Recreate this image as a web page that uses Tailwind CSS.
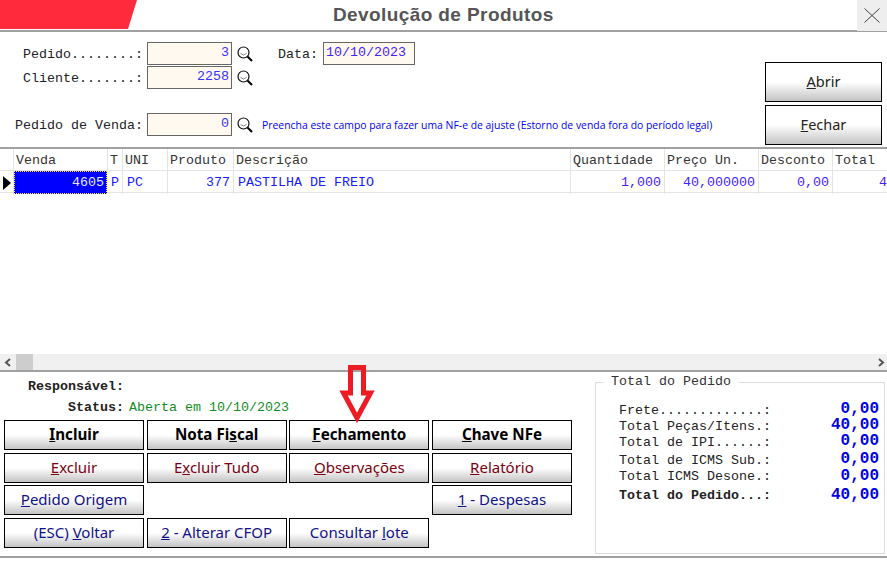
<!DOCTYPE html>
<html lang="pt-BR">
<head>
    <meta charset="UTF-8">
    <title>Devolução de Produtos</title>
    <script src="https://cdn.jsdelivr.net/npm/@tailwindcss/browser@4"></script>
</head>
<body class="bg-white">
    <div class="w-[887px] h-[561px] overflow-hidden flex flex-col bg-white font-['Liberation_Mono',monospace] text-[13.33px] leading-4 text-[#222]">

        <!-- Title bar -->
        <div class="flex h-[30px] shrink-0 relative z-10">
            <div class="w-[137px] h-[29px] bg-[#ff2b3d] [clip-path:polygon(0_0,100%_0,128px_100%,0_100%)]"></div>
            <div class="flex-1 pl-[196px] font-['Liberation_Sans',sans-serif] font-bold text-[19px] tracking-[0.4px] leading-[30px] text-[#555]">Devolução de Produtos</div>
            <div class="w-[30px] h-[31px] bg-[#eeeeee] flex items-center justify-center">
                <svg width="16" height="15" viewBox="0 0 16 15" fill="none" stroke="#444" stroke-width="1"><path d="M0.500 0.500L15.500 14.500M15.500 0.500L0.500 14.500"/></svg>
            </div>
        </div>

        <!-- Header form -->
        <div class="h-[119px] shrink-0 border-y-[2px] border-[#a0a0a0] relative flex">
            <div class="w-[765px] pt-[10px] flex flex-col">
                <div class="flex items-center h-[23px]">
                    <span class="w-[147px] pl-[23px] pt-[3px]">Pedido........:</span>
                    <div class="w-[85px] h-[23px] border border-[#666] bg-[#fff9ef] text-right pr-[2px] pt-[2px] text-[#3333ff]">3</div>
                    <svg class="ml-[5px]" width="16" height="16" viewBox="0 0 16 16" fill="none"><circle cx="6.500" cy="6.500" r="5.500" stroke="#111" stroke-width="1.200"/><path d="M3.500 7.500Q6.500 10.500 9.500 7.500" stroke="#888"/><path d="M10.500 10.500L15 15" stroke="#000" stroke-width="2"/></svg>
                    <span class="ml-[25px] pt-[3px]">Data:</span>
                    <div class="ml-[5px] w-[92px] h-[23px] border border-[#666] bg-[#fff9ef] pl-[2px] pt-[2px] text-[#4422ff]">10/10/2023</div>
                </div>
                <div class="flex items-center h-[23px] mt-[1px]">
                    <span class="w-[147px] pl-[23px] pt-[3px]">Cliente.......:</span>
                    <div class="w-[85px] h-[23px] border border-[#666] bg-[#fff9ef] text-right pr-[2px] pt-[2px] text-[#3333ff]">2258</div>
                    <svg class="ml-[5px]" width="16" height="16" viewBox="0 0 16 16" fill="none"><circle cx="6.500" cy="6.500" r="5.500" stroke="#111" stroke-width="1.200"/><path d="M3.500 7.500Q6.500 10.500 9.500 7.500" stroke="#888"/><path d="M10.500 10.500L15 15" stroke="#000" stroke-width="2"/></svg>
                </div>
                <div class="flex items-center h-[23px] mt-[24px]">
                    <span class="w-[147px] pl-[15px] pt-[3px]">Pedido de Venda:</span>
                    <div class="w-[85px] h-[23px] border border-[#666] bg-[#fff9ef] text-right pr-[2px] pt-[2px] text-[#3333ff]">0</div>
                    <svg class="ml-[5px]" width="16" height="16" viewBox="0 0 16 16" fill="none"><circle cx="6.500" cy="6.500" r="5.500" stroke="#111" stroke-width="1.200"/><path d="M3.500 7.500Q6.500 10.500 9.500 7.500" stroke="#888"/><path d="M10.500 10.500L15 15" stroke="#000" stroke-width="2"/></svg>
                    <span class="ml-[9px] font-['Open_Sans',sans-serif] text-[10.42px] text-[#0000f0] whitespace-nowrap">Preencha este campo para fazer uma NF-e de ajuste (Estorno de venda fora do período legal)</span>
                </div>
            </div>
            <div class="pt-[30px] flex flex-col gap-[3px] font-['Noto_Sans',sans-serif] text-[14.5px]">
                <div class="w-[117px] h-[40px] pb-[2px] border border-black bg-gradient-to-b from-white from-50% to-[#c4c4c4] flex items-center justify-center text-[#222]"><span><span class="underline">A</span>brir</span></div>
                <div class="w-[117px] h-[40px] pb-[2px] border border-black bg-gradient-to-b from-white from-50% to-[#c4c4c4] flex items-center justify-center text-[#222]"><span><span class="underline">F</span>echar</span></div>
            </div>
        </div>

        <!-- Grid -->
        <div class="h-[205px] shrink-0 flex flex-col">
            <div class="grid grid-cols-[14px_94px_15px_45px_66px_337px_94px_94px_74px_54px] h-[22px] border-b border-[#e4e4e4] text-[#333] leading-[23px] whitespace-nowrap">
                <div class="border-r border-[#e4e4e4]"></div>
                <div class="border-r border-[#e4e4e4] pl-[2px]">Venda</div>
                <div class="border-r border-[#e4e4e4] pl-[2px]">T</div>
                <div class="border-r border-[#e4e4e4] pl-[2px]">UNI</div>
                <div class="border-r border-[#e4e4e4] pl-[2px]">Produto</div>
                <div class="border-r border-[#e4e4e4] pl-[2px]">Descrição</div>
                <div class="border-r border-[#e4e4e4] pl-[2px]">Quantidade</div>
                <div class="border-r border-[#e4e4e4] pl-[2px]">Preço Un.</div>
                <div class="border-r border-[#e4e4e4] pl-[2px]">Desconto</div>
                <div class="pl-[2px]">Total</div>
            </div>
            <div class="grid grid-cols-[14px_94px_15px_45px_66px_337px_94px_94px_74px_54px] h-[22px] border-b border-[#e4e4e4] text-[#1a1aff] leading-[23px] whitespace-nowrap">
                <div class="border-r border-[#e4e4e4] flex items-center pl-[3px]"><div class="w-0 h-0 border-y-[7px] border-y-transparent border-l-[8px] border-l-black"></div></div>
                <div class="bg-[#0000ff] border border-dotted border-[#ffe600] text-right pr-[2px] text-[#e8e8ff] mr-[1px] leading-[21px]">4605</div>
                <div class="border-r border-[#e4e4e4] pl-[3px]">P</div>
                <div class="border-r border-[#e4e4e4] pl-[4px]">PC</div>
                <div class="border-r border-[#e4e4e4] text-right pr-[3px]">377</div>
                <div class="border-r border-[#e4e4e4] pl-[4px]">PASTILHA DE FREIO</div>
                <div class="border-r border-[#e4e4e4] text-right pr-[3px] text-[#4422ff]">1,000</div>
                <div class="border-r border-[#e4e4e4] text-right pr-[3px] text-[#4422ff]">40,000000</div>
                <div class="border-r border-[#e4e4e4] text-right pr-[3px] text-[#4422ff]">0,00</div>
                <div class="overflow-hidden pl-[46px] text-[#4422ff]">40,00</div>
            </div>
        </div>

        <!-- Horizontal scrollbar -->
        <div class="h-[16px] shrink-0 bg-[#f0f0f0] flex items-center justify-between">
            <div class="flex items-center h-full">
                <svg class="ml-[4px]" width="8" height="16" viewBox="0 0 8 16" fill="none" stroke="#555" stroke-width="2"><path d="M6 5L2 8.500L6 12"/></svg>
                <div class="ml-[4px] w-[17px] h-full bg-[#cdcdcd]"></div>
            </div>
            <svg class="mr-[2px]" width="8" height="16" viewBox="0 0 8 16" fill="none" stroke="#555" stroke-width="2"><path d="M2 5L6 8.500L2 12"/></svg>
        </div>

        <!-- Bottom panel -->
        <div class="h-[188px] shrink-0 border-y-[2px] border-[#a0a0a0] flex relative">
            <div class="w-[595px] shrink-0">
                <div class="pl-[28px] pt-[7px] h-[25px] font-bold leading-4">Responsável:</div>
                <div class="flex h-[20px] pt-[3px]">
                    <span class="w-[125px] text-right font-bold pr-[1px]">Status:</span>
                    <span class="pl-[4px] text-[#0f8f1f]">Aberta em 10/10/2023</span>
                </div>
                <div class="ml-[4px] mt-[3px] grid grid-cols-[140px_140px_140px_140px] gap-x-[2.67px] font-['Noto_Sans',sans-serif] text-[15px] [&>div]:h-[30px] [&>div]:flex [&>div]:items-center [&>div]:justify-center [&>div]:whitespace-nowrap">
                    <div class="pb-[3px] border border-black bg-gradient-to-b from-white from-50% to-[#c4c4c4] font-bold text-[15.2px] text-black"><span><span class="underline">I</span>ncluir</span></div>
                    <div class="pb-[3px] border border-black bg-gradient-to-b from-white from-50% to-[#c4c4c4] font-bold text-[15.2px] text-black"><span>Nota Fi<span class="underline">s</span>cal</span></div>
                    <div class="pb-[3px] border border-black bg-gradient-to-b from-white from-50% to-[#c4c4c4] font-bold text-[15.2px] text-black"><span><span class="underline">F</span>echamento</span></div>
                    <div class="pb-[3px] border border-black bg-gradient-to-b from-white from-50% to-[#c4c4c4] font-bold text-[15.2px] text-black"><span><span class="underline">C</span>have NFe</span></div>

                    <div class="mt-[3px] pb-[2px] border border-black bg-gradient-to-b from-white from-50% to-[#c4c4c4] text-[#7a0010]"><span><span class="underline">E</span>xcluir</span></div>
                    <div class="mt-[3px] pb-[2px] border border-black bg-gradient-to-b from-white from-50% to-[#c4c4c4] text-[#7a0010]"><span>E<span class="underline">x</span>cluir Tudo</span></div>
                    <div class="mt-[3px] pb-[2px] border border-black bg-gradient-to-b from-white from-50% to-[#c4c4c4] text-[#7a0010]"><span><span class="underline">O</span>bservações</span></div>
                    <div class="mt-[3px] pb-[2px] border border-black bg-gradient-to-b from-white from-50% to-[#c4c4c4] text-[#7a0010]"><span><span class="underline">R</span>elatório</span></div>

                    <div class="mt-[2px] pb-[2px] border border-black bg-gradient-to-b from-white from-50% to-[#c4c4c4] text-[#10108a]"><span><span class="underline">P</span>edido Origem</span></div>
                    <div class="mt-[2px]"></div>
                    <div class="mt-[2px]"></div>
                    <div class="mt-[2px] pb-[2px] border border-black bg-gradient-to-b from-white from-50% to-[#c4c4c4] text-[#10108a]"><span><span class="underline">1</span> - Despesas</span></div>

                    <div class="mt-[3px] pb-[2px] border border-black bg-gradient-to-b from-white from-50% to-[#c4c4c4] text-[#10108a]"><span>(ESC) <span class="underline">V</span>oltar</span></div>
                    <div class="mt-[3px] pb-[2px] border border-black bg-gradient-to-b from-white from-50% to-[#c4c4c4] text-[#10108a]"><span><span class="underline">2</span> - Alterar CFOP</span></div>
                    <div class="mt-[3px] pb-[2px] border border-black bg-gradient-to-b from-white from-50% to-[#c4c4c4] text-[#10108a]"><span>Consultar <span class="underline">l</span>ote</span></div>
                </div>
            </div>

            <!-- Totals group -->
            <fieldset class="w-[290px] h-[180px] mt-[2px] border border-[#dcdcdc] pl-[23px] pr-[5px]">
                <legend class="-ml-[16px] px-[8px] text-[#333] leading-[16px]">Total do Pedido</legend>
                <div class="mt-[13px] flex flex-col">
                    <div class="flex justify-between h-[16px]"><span>Frete.............:</span><span class="-mt-[2px] font-bold text-[16px] text-[#0000e6]">0,00</span></div>
                    <div class="flex justify-between h-[16px]"><span>Total Peças/Itens.:</span><span class="-mt-[2px] font-bold text-[16px] text-[#0000e6]">40,00</span></div>
                    <div class="flex justify-between h-[16px]"><span>Total de IPI......:</span><span class="-mt-[2px] font-bold text-[16px] text-[#0000e6]">0,00</span></div>
                    <div class="flex justify-between h-[16px] mt-[2px]"><span>Total de ICMS Sub.:</span><span class="-mt-[2px] font-bold text-[16px] text-[#0000e6]">0,00</span></div>
                    <div class="flex justify-between h-[16px]"><span>Total ICMS Desone.:</span><span class="-mt-[1px] font-bold text-[16px] text-[#0000e6]">0,00</span></div>
                    <div class="flex justify-between h-[16px] mt-[3px]"><span class="font-bold">Total do Pedido...:</span><span class="-mt-[1px] font-bold text-[16px] text-[#0000e6]">40,00</span></div>
                </div>
            </fieldset>

            <!-- Red arrow annotation -->
            <svg class="absolute left-[339px] top-[-7px] overflow-visible" width="36" height="60" viewBox="0 0 36 60" fill="none" stroke="#ed1c24" stroke-width="5" stroke-linejoin="miter" stroke-miterlimit="10"><path d="M11.500 2.500H24.500V28H31.500L18 53L4.500 28H11.500Z"/></svg>
        </div>
    </div>
</body>
</html>
